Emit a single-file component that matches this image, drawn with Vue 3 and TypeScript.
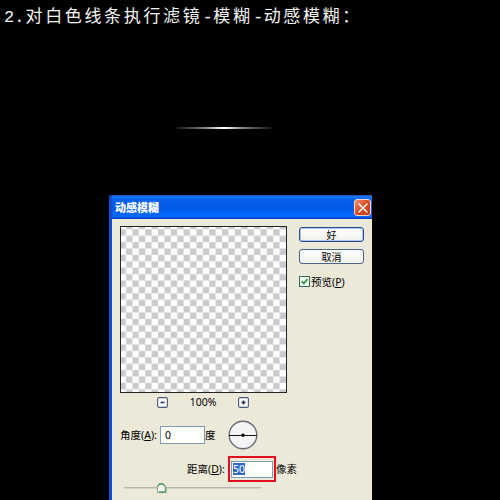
<script setup lang="ts">
import { ref } from 'vue'

const angle = ref('0')
const distance = ref(50)
const preview = ref(true)
</script>

<template>
  <main class="page">
    <h1 class="heading"><span class="num">2.</span>对白色线条执行滤镜<span class="num dash">-</span>模糊<span class="num dash">-</span>动感模糊：</h1>
    <div class="streak"></div>
    <section class="dialog">
      <header class="titlebar">
        <span class="title">动感模糊</span>
        <button class="close" aria-label="关闭">
          <svg width="16" height="16" viewBox="0 0 16 16"><path d="M4 4L12 12M12 4L4 12" stroke="#fff" stroke-width="1.6" stroke-linecap="round" /></svg>
        </button>
      </header>
      <div class="body">
        <div class="top">
          <div class="preview">
            <svg width="165" height="165">
              <defs>
                <pattern id="checks" x="-1.4" y="2.3" width="12.8" height="12.8" patternUnits="userSpaceOnUse">
                  <rect width="12.8" height="12.8" fill="#fff" />
                  <path d="M0 0H6.4V6.4H0zM6.4 6.4H12.8V12.8H6.4z" fill="#cbcbcd" />
                </pattern>
              </defs>
              <rect width="165" height="165" fill="url(#checks)" />
            </svg>
          </div>
          <div class="actions">
            <button class="btn primary">好</button>
            <button class="btn">取消</button>
            <label class="check" @click="preview = !preview">
              <svg width="11" height="11" viewBox="0 0 11 11">
                <rect x=".5" y=".5" width="10" height="10" fill="#f8faf4" stroke="#28705a" />
                <path v-if="preview" d="M2.7 5.2L4.8 7.5L8.5 3.2" fill="none" stroke="#2a9a3c" stroke-width="1.8" />
              </svg>
              <span>预览(<u>P</u>)</span>
            </label>
          </div>
        </div>
        <div class="zoom">
          <svg width="11" height="11" viewBox="0 0 11 11"><rect x=".6" y=".6" width="9.8" height="9.8" rx="1.5" fill="#fafbfc" stroke="#455a78" stroke-width="1.1" /><path d="M3.5 5.5H7.5" stroke="#203050" stroke-width="1.3" /></svg>
          <span class="percent">100%</span>
          <svg width="11" height="11" viewBox="0 0 11 11"><rect x=".6" y=".6" width="9.8" height="9.8" rx="1.5" fill="#fafbfc" stroke="#455a78" stroke-width="1.1" /><path d="M3.5 5.5H7.5M5.5 3.5V7.5" stroke="#101828" stroke-width="1.3" /></svg>
        </div>
        <div class="angle">
          <span class="label">角度(<u>A</u>):</span>
          <div class="field">{{ angle }}</div>
          <span class="unit">度</span>
          <svg class="dial" width="30" height="30" viewBox="0 0 30 30">
            <circle cx="15" cy="15" r="13.8" fill="#f4f4f4" stroke="#696c78" stroke-width="1.4" />
            <path d="M1 15.5H29" stroke="#181818" stroke-width="1.1" />
            <circle cx="15" cy="15.3" r="1.7" fill="#000" />
          </svg>
        </div>
        <div class="distance">
          <span class="label">距离(<u>D</u>):</span>
          <div class="marker"><div class="field"><span class="selected">{{ distance }}</span></div></div>
          <span class="unit">像素</span>
        </div>
        <svg class="slider" width="140" height="12" viewBox="0 0 140 12">
          <path d="M1 4.5H138" stroke="#b9b7ad" />
          <path d="M1 5.5H138" stroke="#d3d1c4" />
          <path d="M34.5 9.5V3.5L36.5 1H40L42.3 3.5V9.5z" fill="#f3f5f0" stroke="#8ea394" />
          <path d="M34.5 3.5L36.5 1H40L42.3 3.5M36 9H42.8V4" fill="none" stroke="#4f9f68" stroke-width="1.3" />
        </svg>
      </div>
    </section>
  </main>
</template>

<style>
body { margin: 0; background: #000; }
</style>

<style scoped>
.page { width: 500px; height: 500px; overflow: hidden; background: #000; color: #000; font-family: "Noto Sans", "Noto Sans CJK SC", sans-serif; }
.heading { display: flex; align-items: baseline; margin: 0; padding: 4px 0 0 4px; height: 24px; box-sizing: border-box; font: 400 17px/22px "Noto Sans CJK SC", sans-serif; letter-spacing: 2.65px; color: #f5f5f5; white-space: nowrap; }
.num { width: 21.5px; font-family: "Liberation Mono", monospace; font-size: 17px; letter-spacing: 0; }
.dash { width: 11px; font-family: "DejaVu Sans Mono", monospace; font-size: 18px; }
.streak { width: 98px; height: 2px; margin: 103px 0 0 175px; background: linear-gradient(90deg, #151515, #555 20%, #999 35%, #fff 48%, #fff 52%, #999 65%, #555 80%, #151515); }
.dialog { width: 263px; height: 305px; margin: 66px 0 0 109px; box-sizing: border-box; border-left: 3px solid #1549cf; background: #ece9d8; border-radius: 2px 2px 0 0; overflow: hidden; }
.titlebar { display: flex; align-items: center; justify-content: space-between; height: 24px; padding: 0 1px 0 3px; box-sizing: border-box; background: linear-gradient(#1450b8 0, #1b78f5 8%, #0560ed 20%, #0058e6 55%, #0367ff 80%, #0562f5 90%, #0040b8); }
.title { color: #fff; font: 900 11px/16px "Noto Sans CJK SC", sans-serif; }
.close { width: 17px; height: 17px; padding: 0; display: grid; place-items: center; border: 1px solid #f5d5cd; border-radius: 3px; background: linear-gradient(135deg, #ef9273, #de4a25 50%, #c93510); }
.body { padding: 7px 0 0 8px; font-size: 10.5px; line-height: 14px; }
.top { display: flex; gap: 12px; }
.preview { width: 165px; height: 165px; border: 1px solid #252525; }
.preview svg { display: block; }
.actions { width: 65px; padding-top: 1px; }
.btn { display: block; width: 65px; height: 15px; padding: 0; margin: 0 0 7px; box-sizing: border-box; border: 1px solid #476689; border-radius: 3px; background: linear-gradient(#fff, #f1f0ea); font: 400 10px/13px "Noto Sans CJK SC", sans-serif; color: #000; }
.primary { border-color: #254f92; box-shadow: inset 0 0 0 1px #a9c4ee; }
.check { display: flex; align-items: center; gap: 1px; height: 14px; margin-top: 10px; white-space: nowrap; }
.check span { padding-top: 1px; }
u { text-underline-offset: 1px; }
.zoom { display: flex; align-items: center; height: 14px; padding-left: 37px; margin-top: 2px; }
.percent { width: 70px; text-align: center; }
.angle { display: flex; align-items: center; height: 32px; margin-top: 10px; }
.angle .label { width: 40px; white-space: nowrap; }
.field { box-sizing: border-box; width: 45px; height: 18px; padding-left: 4px; line-height: 16px; border: 1px solid #7f9db9; background: #fff; }
.dial { margin-left: 12px; }
.distance { display: flex; align-items: center; height: 26px; margin-top: 5px; padding-left: 67px; }
.distance .label { width: 41px; white-space: nowrap; }
.marker { box-sizing: border-box; width: 48px; height: 26px; padding: 3px 1px; border: 2px solid #e01020; }
.marker .field { width: 42px; height: 17px; padding-left: 1px; line-height: 15px; }
.selected { display: inline-block; height: 12px; line-height: 12px; background: #316ac5; color: #fff; }
.unit { white-space: nowrap; }
.slider { display: block; margin: 1px 0 0 3px; }
</style>
